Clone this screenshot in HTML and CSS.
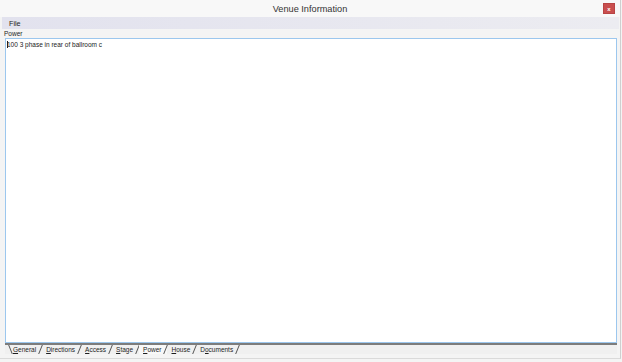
FILE: index.html
```html
<!DOCTYPE html>
<html>
<head>
<meta charset="utf-8">
<link rel="stylesheet" href="styles.css">
</head>
<body>
<div class="window">
  <div class="titlebar">
    <div></div>
    <div class="title">Venue Information</div>
    <div class="controls"><span class="close">x</span></div>
  </div>
  <div class="menubar"><span class="menu-item">File</span></div>
  <div class="content">
    <div class="label">Power</div>
    <div class="editor"><span class="caret"></span>100 3 phase in rear of ballroom c</div>
    <div class="tabs">
      <span class="tab first"><u>G</u>eneral</span>
      <span class="tab"><u>D</u>irections</span>
      <span class="tab"><u>A</u>ccess</span>
      <span class="tab"><u>S</u>tage</span>
      <span class="tab active"><u>P</u>ower</span>
      <span class="tab"><u>H</u>ouse</span>
      <span class="tab">D<u>o</u>cuments</span>
    </div>
  </div>
</div>
</body>
</html>
```

FILE: styles.css
```css
html, body {
  margin: 0;
  padding: 0;
  background: #f4f4f4;
}
.window {
  width: 621px;
  height: 359px;
  box-sizing: border-box;
  display: flex;
  flex-direction: column;
  background: #f4f4f4;
  border-right: 1px solid #cfcfcf;
  border-bottom: 1px solid #dadada;
  font-family: "Liberation Sans", Arial, sans-serif;
  color: #1e1e1e;
}
.titlebar {
  height: 17px;
  display: grid;
  grid-template-columns: 1fr auto 1fr;
  align-items: center;
  background: #f8f8f8;
}
.title {
  font-size: 9.2px;
  color: #333;
  padding-top: 1px;
}
.controls {
  display: flex;
  justify-content: flex-end;
  padding-right: 5px;
}
.close {
  width: 12px;
  height: 11px;
  background: #c94e4e;
  color: #fff;
  font-size: 6px;
  line-height: 10px;
  text-align: center;
  font-weight: bold;
  box-sizing: border-box;
  border: 1px solid #b84444;
}
.menubar {
  height: 12px;
  margin: 0 1px 0 2px;
  background: linear-gradient(to right, #e2e2ee, #ececf1);
  display: flex;
  align-items: center;
  padding-left: 7px;
}
.menu-item {
  font-size: 7.2px;
  color: #222;
}
.content {
  flex: 1;
  display: flex;
  flex-direction: column;
  padding: 0 3px 0 4px;
}
.label {
  height: 9px;
  font-size: 6.5px;
  line-height: 9px;
  padding-left: 0;
}
.editor {
  height: 305px;
  box-sizing: border-box;
  margin-left: 1px;
  border: 1px solid #9cc7ee;
  background: #fff;
  font-size: 6.5px;
  padding: 2px 0 0 1px;
  line-height: 8px;
  color: #222;
  position: relative;
}
.caret {
  display: inline-block;
  width: 1px;
  height: 7px;
  background: #222;
  vertical-align: -1px;
  margin-right: -1px;
}
.tabs {
  margin-left: 1px;
  height: 9px;
  border-top: 2px solid #7c7c7c;
  display: flex;
  padding-left: 4px;
  background: #f0f0f0;
}
.tab {
  position: relative;
  font-size: 6.5px;
  line-height: 9px;
  padding: 0 6px 0 4px;
  color: #1e1e1e;
}
.tab::after {
  content: "";
  position: absolute;
  right: 1px;
  top: 0;
  width: 1px;
  height: 9px;
  background: #555;
  transform: skewX(-22deg);
}
.tab.first::before {
  content: "";
  position: absolute;
  left: 1px;
  top: 0;
  width: 1px;
  height: 9px;
  background: #555;
  transform: skewX(22deg);
}
.tab.active {
  background: #f8f8f8;
}
.tab u {
  text-decoration-thickness: 1px;
  text-underline-offset: 1px;
}
```
